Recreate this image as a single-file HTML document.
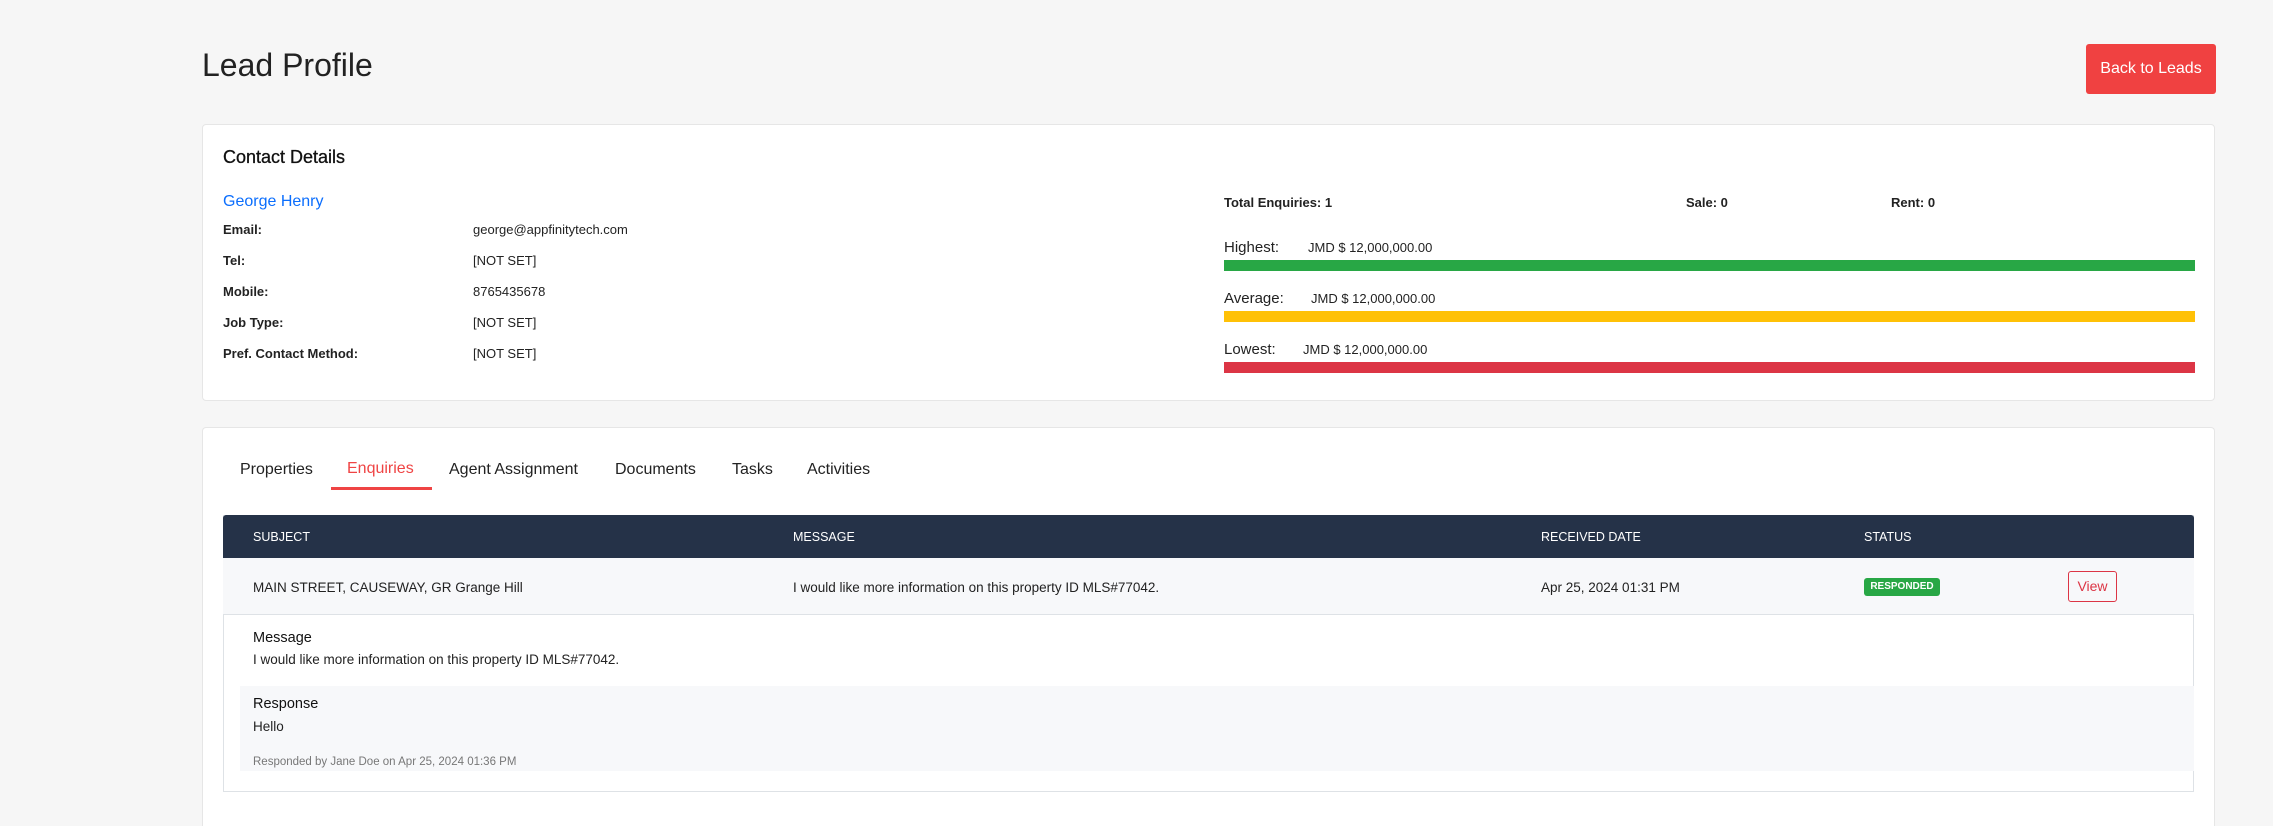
<!DOCTYPE html>
<html><head><meta charset="utf-8"><style>
*{margin:0;padding:0;box-sizing:border-box}
html,body{width:2273px;height:826px;overflow:hidden}
body{background:#f6f6f6;font-family:"Liberation Sans",sans-serif;color:#222;position:relative}
.t{position:absolute;line-height:1;white-space:nowrap}
.b{font-weight:bold}
.box{position:absolute}
</style></head><body>
<div class="t" style="left:202px;top:49px;font-size:32px;color:#222">Lead Profile</div>
<div class="box" style="left:2086px;top:44px;width:130px;height:50px;background:#f04141;border-radius:3px;color:#fff;font-size:16px;line-height:50px;text-align:center">Back to Leads</div>

<div class="box" style="left:202px;top:124px;width:2013px;height:277px;background:#fff;border:1px solid #e6e6e6;border-radius:4px"></div>
<div class="t" style="left:223px;top:148px;font-size:18px;color:#111;-webkit-text-stroke:0.3px #111">Contact Details</div>
<div class="t" style="left:223px;top:194px;font-size:16px;color:#0b6efd">George Henry</div>
<div class="t b" style="left:223px;top:223px;font-size:13px">Email:</div>
<div class="t" style="left:473px;top:223px;font-size:13px">george@appfinitytech.com</div>
<div class="t b" style="left:223px;top:254px;font-size:13px">Tel:</div>
<div class="t" style="left:473px;top:254px;font-size:13px">[NOT SET]</div>
<div class="t b" style="left:223px;top:285px;font-size:13px">Mobile:</div>
<div class="t" style="left:473px;top:285px;font-size:13px">8765435678</div>
<div class="t b" style="left:223px;top:316px;font-size:13px">Job Type:</div>
<div class="t" style="left:473px;top:316px;font-size:13px">[NOT SET]</div>
<div class="t b" style="left:223px;top:347px;font-size:13px">Pref. Contact Method:</div>
<div class="t" style="left:473px;top:347px;font-size:13px">[NOT SET]</div>

<div class="t b" style="left:1224px;top:196px;font-size:13px">Total Enquiries: 1</div>
<div class="t b" style="left:1686px;top:196px;font-size:13px">Sale: 0</div>
<div class="t b" style="left:1891px;top:196px;font-size:13px">Rent: 0</div>

<div class="t" style="left:1224px;top:240px;font-size:15px">Highest:</div>
<div class="t" style="left:1308px;top:241px;font-size:13px">JMD $ 12,000,000.00</div>
<div class="box" style="left:1224px;top:260px;width:971px;height:11px;background:#28a745"></div>
<div class="t" style="left:1224px;top:291px;font-size:15px">Average:</div>
<div class="t" style="left:1311px;top:292px;font-size:13px">JMD $ 12,000,000.00</div>
<div class="box" style="left:1224px;top:311px;width:971px;height:11px;background:#ffc107"></div>
<div class="t" style="left:1224px;top:342px;font-size:15px">Lowest:</div>
<div class="t" style="left:1303px;top:343px;font-size:13px">JMD $ 12,000,000.00</div>
<div class="box" style="left:1224px;top:362px;width:971px;height:11px;background:#dc3545"></div>

<div class="box" style="left:202px;top:427px;width:2013px;height:399px;background:#fff;border:1px solid #e6e6e6;border-bottom:none;border-radius:4px 4px 0 0"></div>
<div class="t" style="left:240px;top:462px;font-size:16px">Properties</div>
<div class="t" style="left:347px;top:461px;font-size:16px;color:#ef4444">Enquiries</div>
<div class="box" style="left:331px;top:487px;width:101px;height:3px;background:#ef4444"></div>
<div class="t" style="left:449px;top:462px;font-size:16px">Agent Assignment</div>
<div class="t" style="left:615px;top:462px;font-size:16px">Documents</div>
<div class="t" style="left:732px;top:462px;font-size:16px">Tasks</div>
<div class="t" style="left:807px;top:462px;font-size:16px">Activities</div>

<div class="box" style="left:223px;top:515px;width:1971px;height:277px;border:1px solid #dee2e6;border-top:none;background:#fff"></div>
<div class="box" style="left:223px;top:515px;width:1971px;height:43px;background:#253248;border-radius:3px 3px 0 0"></div>
<div class="t" style="left:253px;top:531px;font-size:12.5px;color:#fff">SUBJECT</div>
<div class="t" style="left:793px;top:531px;font-size:12.5px;color:#fff">MESSAGE</div>
<div class="t" style="left:1541px;top:531px;font-size:12.5px;color:#fff">RECEIVED DATE</div>
<div class="t" style="left:1864px;top:531px;font-size:12.5px;color:#fff">STATUS</div>
<div class="box" style="left:223px;top:558px;width:1971px;height:57px;background:#f7f8fa;border-bottom:1px solid #dee2e6"></div>
<div class="t" style="left:253px;top:581px;font-size:13.5px">MAIN STREET, CAUSEWAY, GR Grange Hill</div>
<div class="t" style="left:793px;top:581px;font-size:13.5px">I would like more information on this property ID MLS#77042.</div>
<div class="t" style="left:1541px;top:581px;font-size:13.5px">Apr 25, 2024 01:31 PM</div>
<div class="box" style="left:1864px;top:578px;width:76px;height:18px;background:#28a745;border-radius:3px;color:#fff;font-size:10px;font-weight:bold;line-height:18px;text-align:center">RESPONDED</div>
<div class="box" style="left:2068px;top:571px;width:49px;height:31px;border:1px solid #dc3545;border-radius:3px;color:#dc3545;font-size:14px;line-height:29px;text-align:center">View</div>

<div class="t" style="left:253px;top:631px;font-size:14.5px;color:#111">Message</div>
<div class="t" style="left:253px;top:653px;font-size:13.5px">I would like more information on this property ID MLS#77042.</div>
<div class="box" style="left:240px;top:686px;width:1954px;height:85px;background:#f7f8fa"></div>
<div class="t" style="left:253px;top:697px;font-size:14.5px;color:#111">Response</div>
<div class="t" style="left:253px;top:720px;font-size:13.5px">Hello</div>
<div class="t" style="left:253px;top:757px;font-size:11.5px;color:#777">Responded by Jane Doe on Apr 25, 2024 01:36 PM</div>
</body></html>
